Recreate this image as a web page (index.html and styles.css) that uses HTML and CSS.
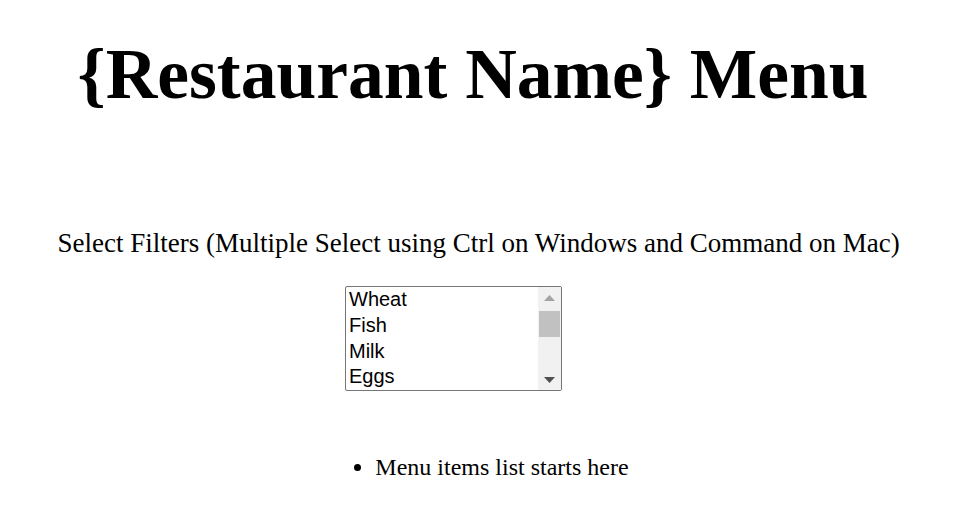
FILE: index.html
```html
<!DOCTYPE html>
<html>
<head>
<meta charset="utf-8">
<link rel="stylesheet" href="styles.css">
</head>
<body>
<h1 class="title">{Restaurant Name} Menu&nbsp;</h1>
<div class="filters">
  <p class="filters-label">Select Filters (Multiple Select using Ctrl on Windows and Command on Mac)&nbsp;</p>
  <div class="select-row">
    <div class="listbox" role="listbox" aria-multiselectable="true">
      <div class="options">
        <div class="option" role="option">Wheat</div>
        <div class="option" role="option">Fish</div>
        <div class="option" role="option">Milk</div>
        <div class="option" role="option">Eggs</div>
      </div>
      <div class="scrollbar">
        <div class="sb-button">
          <svg width="11" height="6" viewBox="0 0 11 6"><polygon points="0,6 11,6 5.5,0" fill="#a3a3a3"/></svg>
        </div>
        <div class="sb-track"><div class="sb-thumb"></div></div>
        <div class="sb-button">
          <svg width="11" height="6" viewBox="0 0 11 6"><polygon points="0,0 11,0 5.5,6" fill="#505050"/></svg>
        </div>
      </div>
    </div>
  </div>
</div>
<ul class="menu-list">
  <li class="menu-item">Menu items list starts here</li>
</ul>
</body>
</html>
```
FILE: styles.css
```css
body {
  margin: 8px;
  font-family: "Liberation Serif", "Times New Roman", serif;
  color: #000;
  background: #fff;
}
.title {
  font-size: 71.5px;
  font-weight: bold;
  text-align: center;
  margin: 25px 0 0;
}
.filters {
  margin-top: 113px;
  text-align: center;
}
.filters-label {
  font-size: 27px;
  margin: 0 0 27px;
}
.select-row {
  display: flex;
  justify-content: center;
}
.listbox {
  display: flex;
  width: 215px;
  height: 103px;
  border: 1px solid #767676;
  border-radius: 2px;
  margin-right: 57px;
  background: #fff;
  overflow: hidden;
}
.options {
  flex: 1;
  display: flex;
  flex-direction: column;
  font-family: "Liberation Sans", Arial, sans-serif;
  font-size: 20px;
  text-align: left;
}
.option {
  flex: 1;
  padding: 0 3px;
  line-height: 24px;
  color: #000;
}
.scrollbar {
  width: 23px;
  display: flex;
  flex-direction: column;
  background: #f1f1f1;
}
.sb-button {
  height: 21px;
  display: flex;
  align-items: center;
  justify-content: center;
}
.sb-track {
  flex: 1;
  padding: 3px 1px 0;
}
.sb-thumb {
  height: 26px;
  background: #c1c1c1;
}
.menu-list {
  font-size: 24px;
  margin: 63px 0 0;
  padding-left: 40px;
}
.menu-item {
  width: fit-content;
  margin: 0 auto;
}
```
